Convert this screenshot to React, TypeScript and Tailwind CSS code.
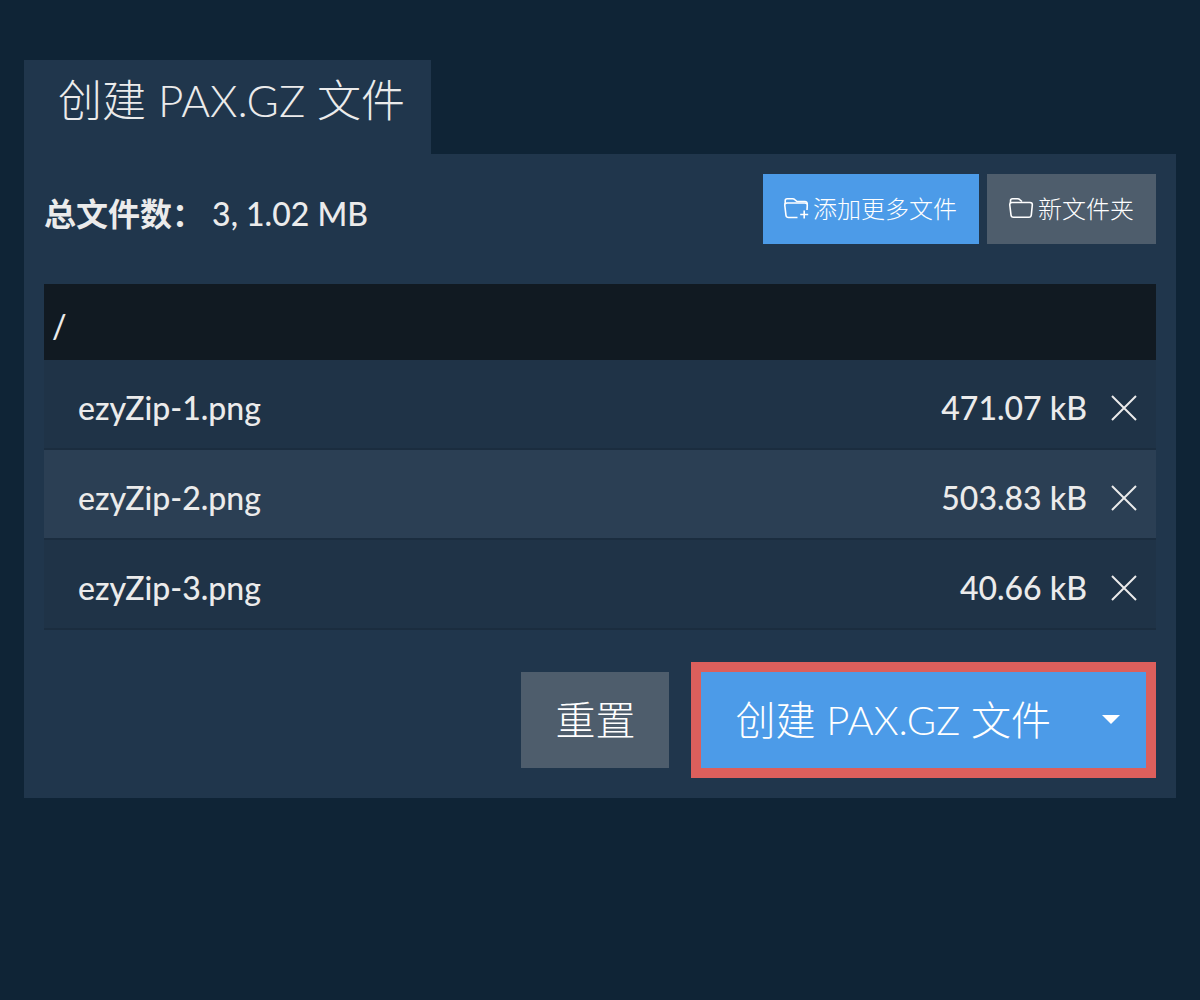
import React from "react";

const files = [
  { name: "ezyZip-1.png", size: "471.07 kB" },
  { name: "ezyZip-2.png", size: "503.83 kB" },
  { name: "ezyZip-3.png", size: "40.66 kB" },
];

function FolderIcon({ plus = false }: { plus?: boolean }) {
  return (
    <svg width="30" height="24" viewBox="0 0 30 24" fill="none" stroke="currentColor" strokeWidth="1.6" strokeLinejoin="round" aria-hidden="true">
      {plus ? (
        <>
          <path d="M14.500 20.500H5.500Q3.300 20.500 3 18.500L1.800 8.500Q1.600 6 4 6H22Q24.500 6 24.300 8.500L24 13" />
          <path d="M2.200 7V3.800Q2.200 1.800 4.200 1.800H9.500Q11 1.800 12 2.800L14 4.500H22Q24 4.500 24.300 7M21.200 13.500V21.500M17.200 17.500H25.200" />
        </>
      ) : (
        <>
          <path d="M4 5.500H22Q24.500 5.500 24.300 8L23.300 18Q23 20.300 21 20.300H5.500Q3.200 20.300 3 18L1.800 8Q1.600 5.500 4 5.500Z" />
          <path d="M2.500 6V3.800Q2.500 1.800 4.500 1.800H9.500Q11 1.800 12 2.800L14 4.500" />
        </>
      )}
    </svg>
  );
}

export default function App() {
  return (
    <main className="min-h-screen bg-[#0f2436] px-6 pt-[60px] text-[#ebebeb] [font-family:Lato,'Noto_Sans_CJK_SC',sans-serif]">
      <h1 className="w-fit bg-[#20364c] pt-2 pr-[26px] pb-[22px] pl-[34px] text-[44px] leading-[64px] font-light">
        创建 PAX.GZ 文件
      </h1>
      <section className="bg-[#20364c] p-5">
        <div className="flex items-start justify-between">
          <p className="pt-4 text-[32px] leading-[48px] font-medium">
            <strong>总文件数：</strong> 3, 1.02 MB
          </p>
          <div className="flex gap-2">
            <button className="flex h-[70px] items-center bg-[#4c9be8] pr-[22px] pl-5 text-2xl font-light text-white"><FolderIcon plus />添加更多文件</button>
            <button className="flex h-[70px] items-center bg-[#4e5d6c] pr-[22px] pl-[21px] text-2xl font-light text-white"><FolderIcon />新文件夹</button>
          </div>
        </div>
        <div className="mt-10 h-[76px] bg-[#111a22] px-2 pt-[18px] text-[32px] leading-[48px] font-medium">/</div>
        <ul>
          {files.map((f) => (
            <li key={f.name} className="flex h-[90px] items-center border-b-2 border-[#1b2d3f] bg-[#1f3347] pt-2 pr-[19px] pl-[34px] text-[32px] leading-[48px] font-medium even:bg-[#2b3f54]">
              <span className="flex-1">{f.name}</span>
              <span>{f.size}</span>
              <button aria-label={`移除 ${f.name}`} className="ml-6">
                <svg width="26" height="26" viewBox="0 0 26 26" stroke="currentColor" strokeWidth="2"><path d="M1 1L25 25M25 1L1 25" /></svg>
              </button>
            </li>
          ))}
        </ul>
        <div className="mt-8 flex items-center justify-end gap-[22px]">
          <button className="h-24 bg-[#4e5d6c] px-[34px] text-[40px] font-light text-white">重置</button>
          <div className="flex border-[10px] border-[#dc5f5c] bg-[#4c9be8] text-white">
            <button className="h-24 pl-[34px] text-[40px] font-light">创建 PAX.GZ 文件</button>
            <button aria-label="更多选项" className="pr-[26px] pl-[51px]">
              <svg width="18" height="10" viewBox="0 0 18 10" fill="currentColor"><path d="M0 0H18L9 9Z" /></svg>
            </button>
          </div>
        </div>
      </section>
    </main>
  );
}
